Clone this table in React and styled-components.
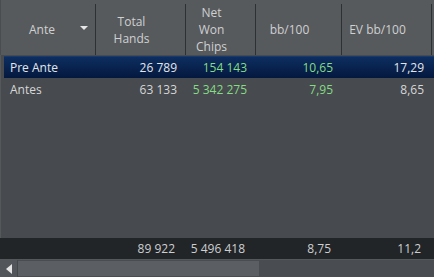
import React from 'react'
import styled, { createGlobalStyle } from 'styled-components'

const COLS = '95px 90px 70px 86px 90px 3px'

const rows = [
  { name: 'Pre Ante', hands: '26 789', won: '154 143', bb: '10,65', ev: '17,29', selected: true },
  { name: 'Antes', hands: '63 133', won: '5 342 275', bb: '7,95', ev: '8,65' }
]

const totals = { hands: '89 922', won: '5 496 418', bb: '8,75', ev: '11,2' }

export default function App() {
  return (
    <>
      <Global />
      <Table>
        <Header>
          <HeadCell>
            <HeadLabel>Ante</HeadLabel>
            <Caret />
          </HeadCell>
          <HeadCell>
            <HeadLabel>Total<br />Hands</HeadLabel>
          </HeadCell>
          <HeadCell>
            <HeadLabel>Net<br />Won<br />Chips</HeadLabel>
          </HeadCell>
          <HeadCell>
            <HeadLabel>bb/100</HeadLabel>
          </HeadCell>
          <HeadCell>
            <HeadLabel>EV bb/100</HeadLabel>
          </HeadCell>
          <div />
        </Header>
        <Body>
          {rows.map(row => (
            <Row key={row.name} $selected={row.selected}>
              <NameCell $selected={row.selected}>{row.name}</NameCell>
              <NumCell $selected={row.selected}>{row.hands}</NumCell>
              <NumCell $green>{row.won}</NumCell>
              <NumCell $green>{row.bb}</NumCell>
              <NumCell $selected={row.selected}>{row.ev}</NumCell>
            </Row>
          ))}
        </Body>
        <Footer>
          <div />
          <FootCell>{totals.hands}</FootCell>
          <FootCell>{totals.won}</FootCell>
          <FootCell>{totals.bb}</FootCell>
          <FootCell>{totals.ev}</FootCell>
        </Footer>
        <ScrollBar>
          <ArrowButton>
            <svg width="6" height="10" viewBox="0 0 6 10">
              <path d="M6 0 L0 5 L6 10 Z" fill="#e4e4e4" />
            </svg>
          </ArrowButton>
          <Track>
            <Thumb />
          </Track>
        </ScrollBar>
      </Table>
    </>
  )
}

const Global = createGlobalStyle`
  html, body {
    margin: 0;
    padding: 0;
    background: #474a4e;
  }
  body {
    font-family: "Open Sans", "Liberation Sans", sans-serif;
    font-size: 12px;
  }
`

const Table = styled.div`
  width: 434px;
  height: 277px;
  display: flex;
  flex-direction: column;
  overflow: hidden;
  background: #474a4e;
`

const Header = styled.div`
  height: 55px;
  flex: none;
  display: grid;
  grid-template-columns: ${COLS};
  background: #575a5d;
  border-left: 1px solid #4a4d50;
`

const HeadCell = styled.div`
  display: flex;
  align-items: center;
  justify-content: center;
  padding-right: 18px;
  margin: 4px 0 3px;
  border-right: 1px solid #2e3133;
  position: relative;
  &:first-child {
    padding-right: 12px;
  }
`

const HeadLabel = styled.div`
  color: #cfd0d1;
  text-align: center;
  line-height: 17px;
`

const Caret = styled.span`
  position: absolute;
  right: 7px;
  top: 22px;
  width: 0;
  height: 0;
  border-left: 4px solid transparent;
  border-right: 4px solid transparent;
  border-top: 4px solid #e6e6e6;
`

const Body = styled.div`
  flex: 1;
  padding: 1px 0 0 3px;
  border-left: 1px solid #55585b;
  display: flex;
  flex-direction: column;
`

const Row = styled.div`
  box-sizing: border-box;
  display: grid;
  grid-template-columns: 92px 90px 70px 86px 93px;
  height: 22px;
  align-items: center;
  background: ${({ $selected }) =>
    $selected ? 'linear-gradient(#0d2e60, #04183e)' : 'transparent'};
  border-top: 1px solid ${({ $selected }) => ($selected ? '#163a6e' : 'transparent')};
`

const NameCell = styled.div`
  padding-left: 6px;
  color: ${({ $selected }) => ($selected ? '#e4e6ea' : '#d6d7d8')};
  white-space: nowrap;
`

const NumCell = styled.div`
  text-align: right;
  padding-right: 9px;
  white-space: nowrap;
  color: ${({ $green, $selected }) =>
    $green ? '#84dc84' : $selected ? '#e4e6ea' : '#d6d7d8'};
  &:last-child {
    padding-right: 11px;
  }
`

const Footer = styled.div`
  height: 21px;
  flex: none;
  display: grid;
  grid-template-columns: 95px 90px 70px 86px 90px;
  align-items: center;
  background: #222528;
`

const FootCell = styled.div`
  text-align: right;
  padding-right: 10px;
  color: #cdcfd0;
  white-space: nowrap;
`

const ScrollBar = styled.div`
  height: 18px;
  flex: none;
  display: flex;
  background: #494c50;
  border-top: 1px solid #55585b;
  box-sizing: border-box;
`

const ArrowButton = styled.div`
  width: 18px;
  display: flex;
  align-items: center;
  justify-content: center;
  background: #525559;
  border-right: 1px solid #44474a;
  box-sizing: border-box;
`

const Track = styled.div`
  flex: 1;
  display: flex;
  padding: 1px 0;
`

const Thumb = styled.div`
  width: 241px;
  background: #5b5e62;
`
